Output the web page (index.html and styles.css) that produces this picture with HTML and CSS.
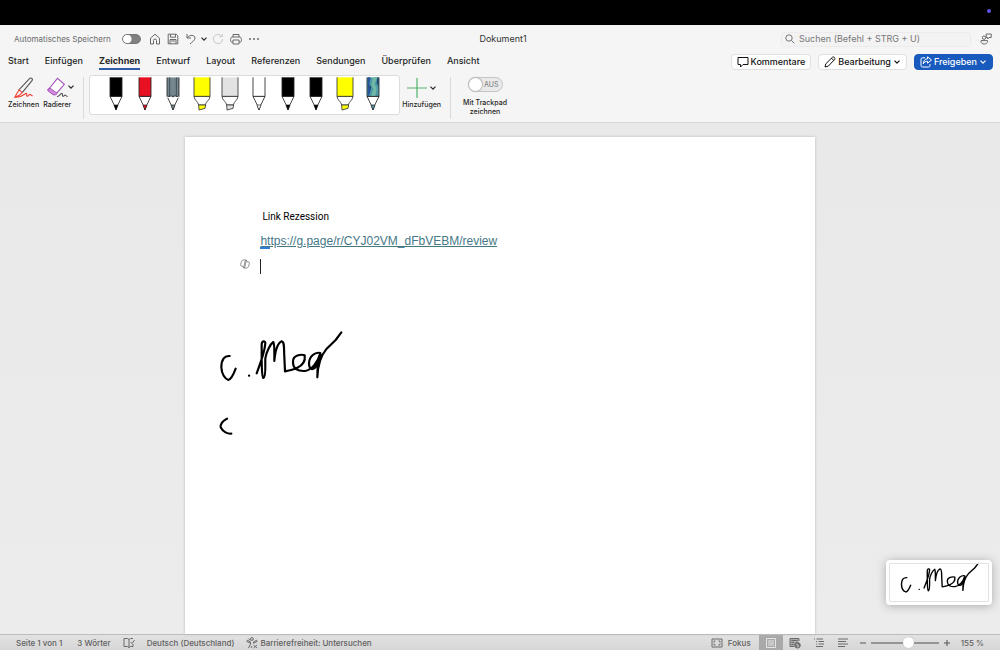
FILE: index.html
```html
<!DOCTYPE html>
<html lang="de">
<head>
<meta charset="utf-8">
<title>Dokument1</title>
<link rel="stylesheet" href="styles.css">
</head>
<body>
<svg class="defs" aria-hidden="true">
  <defs>
    <symbol id="chev" viewBox="0 0 8 8"><path d="M1.500 2.700 4 5.200l2.500-2.500" fill="none" stroke="currentColor" stroke-width="1.200"/></symbol>
    <symbol id="pen" viewBox="0 0 60 100">
      <path d="M12 57 25 84 30 98 35 84 48 57Z" fill="#fff" stroke="#222" stroke-width="2.500"/>
      <path d="M24 83h12l-6 15Z" fill="currentColor" stroke="#222" stroke-width="2"/>
      <path d="M12 0v57h36V0" fill="currentColor" stroke="#222" stroke-width="2.500"/>
    </symbol>
    <symbol id="marker" viewBox="0 0 60 100">
      <path d="M6 57c1 13 12 14 14 26h20c2-12 13-13 14-26Z" fill="#fff" stroke="#333" stroke-width="2.500"/>
      <path d="M20 83h21l-2 10-18 5Z" fill="currentColor" stroke="#333" stroke-width="2.500"/>
      <path d="M6 0v57h48V0" fill="currentColor" stroke="#333" stroke-width="2.500"/>
    </symbol>
    <g id="signature" fill="none" stroke="#000" stroke-width="6.500" stroke-linecap="round" stroke-linejoin="round">
      <path d="M74 108C58 107 49 119 49 142c1 20 11 35 21 38 8-2 16-18 22-34"/>
      <path d="M132 167h.5"/>
      <path d="M155 160c8-22 24-62 26-90 0-9-11-8-11 4v36c0 30 0 58 5 64 9-2 5-44 6-59 3-20 15-43 24-49 4 4 3 34 3 57 2-23 7-52 22-59 10 2 6 26 8 46l2 44c12-2 24-4 37-11 15-7 25-18 22-37-10-4-36-1-35 19 0 24 16 29 36 28 20-3 39-26 46-54-16-4-33 10-34 30 0 22 14 22 21 10 8-12 12-24 14-35-10 16-10 41-10 68 1-32 8-62 28-86l27-26 17-23"/>
    </g>
  </defs>
</svg>

<div class="menubar"><span class="mic-dot"></span></div>

<header class="header">
  <div class="titlebar">
    <div class="quick">
      <label class="autosave" for="autosave">Automatisches Speichern</label>
      <input class="switch" id="autosave" type="checkbox">
      <button class="icon-btn" aria-label="Start"><svg viewBox="0 0 12 12"><path d="M1.500 5.200 6 1.200l4.500 4V11H7.500V7.500a1.500 1.500 0 0 0-3 0V11h-3Z"/></svg></button>
      <button class="icon-btn" aria-label="Speichern"><svg viewBox="0 0 12 12"><path d="M1.200 1.200h8l1.600 1.600v8H1.200ZM3.500 1.200v3h5v-3M3 10.800V6.500h6v4.300M4 8h4"/></svg></button>
      <button class="icon-btn undo" aria-label="Rückgängig"><svg viewBox="0 0 12 12"><path d="M2 1v4h4M2 5c3-4 8-3 8 0 0 2.500-3 4-5 6"/></svg></button>
      <button class="chev-btn more" aria-label="Mehr"><svg><use href="#chev"/></svg></button>
      <button class="icon-btn pale" aria-label="Wiederholen"><svg viewBox="0 0 12 12"><path d="M9.500 3A4.600 4.600 0 1 0 10.600 6M10.300 1v2.700H7.500"/></svg></button>
      <button class="icon-btn" aria-label="Drucken"><svg viewBox="0 0 12 12"><path d="M3 4V1.500h6V4M3 9H1.500C0 9 .5 4 2 4h8c1.500 0 2 5 .5 5H9M3 7h6v4H3Z"/></svg></button>
      <button class="icon-btn" aria-label="Weitere"><svg viewBox="0 0 12 12"><path class="dots" d="M2 6h0M6 6h0M10 6h0"/></svg></button>
    </div>
    <h1 class="doc-title">Dokument1</h1>
    <div class="find">
      <div class="search">
        <svg viewBox="0 0 10 10"><circle cx="4" cy="4" r="3.200"/><path d="m6.300 6.300 3 3"/></svg>
        <input type="search" aria-label="Suchen" placeholder="Suchen (Befehl + STRG + U)">
      </div>
      <button class="icon-btn" aria-label="Personen"><svg viewBox="0 0 12 12"><path d="M6.200 1h5v3.500H9L7.700 6V4.500H6.200ZM1 7.600h6.500v1c0 3.200-6.500 3.200-6.500 0Z"/><circle cx="4" cy="4.700" r="1.700"/></svg></button>
    </div>
  </div>

  <div class="tabrow">
    <nav class="tabs">
      <a href="#start">Start</a><a href="#einfuegen">Einfügen</a><a class="active" href="#zeichnen">Zeichnen</a><a href="#entwurf">Entwurf</a><a href="#layout">Layout</a><a href="#referenzen">Referenzen</a><a href="#sendungen">Sendungen</a><a href="#ueberpruefen">Überprüfen</a><a href="#ansicht">Ansicht</a>
    </nav>
    <div class="actions">
      <button class="action"><svg viewBox="0 0 12 12"><path d="M1 1.500h10v7H6L3.500 11V8.500H1Z"/></svg>Kommentare</button>
      <button class="action"><svg viewBox="0 0 12 12"><path d="m1 11 .8-3.200L8.500 1.200c1.200-1 3.200.8 2.200 2.200L4.200 10.200ZM7.500 2.200l2.300 2.300"/></svg>Bearbeitung<svg class="chev"><use href="#chev"/></svg></button>
      <button class="action primary"><svg viewBox="0 0 12 12"><path d="M5 1.800H2.500Q1 1.800 1 3.300v6Q1 11 2.500 11h6Q10 11 10 9.500V8M7.500.8l4 3.200-4 3.200V5.300C5.500 5.300 4.300 6 3.300 7.800c0-3 1.700-5 4.200-5Z"/></svg>Freigeben<svg class="chev"><use href="#chev"/></svg></button>
    </div>
  </div>

  <div class="ribbon">
    <div class="group tools">
      <button class="tool"><svg class="art" viewBox="0 0 24 24"><path d="M6.500 14 18 1.700c2-1.500 4 .5 2.700 2.300L10 17" fill="none" stroke="#555" stroke-width="1.200"/><path d="M6.500 14 10 17 7 20 2 22Zm-4.500 8c6 1 9-2 12-4 2-1 0 3 1.500 3s2-2 3-2 1 1.500 3 1.500" fill="none" stroke="#ee4136" stroke-width="1.200"/></svg>Zeichnen</button>
      <button class="tool"><svg class="art" viewBox="0 0 24 24"><path d="m4 12 8.500-10.500L20 8l-9.500 11H8l-6-5Z" fill="#fff" stroke="#a452b8" stroke-width="1.200"/><path d="m4 12-2 3 6 4.500h2.500L12 17.500Z" fill="#d08bdd" stroke="#a452b8"/><path d="M12 21c2 1.500 4-4 5.500-3s-.5 3 1 3 1.500-2 3-1 1 1.500 2 1" fill="none" stroke="#555" stroke-width="1.200"/></svg>Radierer</button>
      <button class="chev-btn" aria-label="Radiereroptionen"><svg><use href="#chev"/></svg></button>
    </div>
    <div class="pens">
      <button class="pen black" aria-label="Stift schwarz"><svg><use href="#pen"/></svg></button>
      <button class="pen red" aria-label="Stift rot"><svg><use href="#pen"/></svg></button>
      <button class="pen slate" aria-label="Bleistift"><svg viewBox="0 0 60 100"><use href="#pen" width="60" height="100"/><path d="M12 55q6 7 12 0 6 8 12 0 6 7 12 0v6H12Z" fill="#fff"/><path d="M12 55q6 7 12 0 6 8 12 0 6 7 12 0M20 0v55M40 0v55" fill="none" stroke="#37434b" stroke-width="2.500"/></svg></button>
      <button class="pen yellow" aria-label="Textmarker gelb"><svg><use href="#marker"/></svg></button>
      <button class="pen gray" aria-label="Textmarker grau"><svg><use href="#marker"/></svg></button>
      <button class="pen white" aria-label="Stift weiß"><svg><use href="#pen"/></svg></button>
      <button class="pen black" aria-label="Stift schwarz 2"><svg><use href="#pen"/></svg></button>
      <button class="pen black" aria-label="Stift schwarz 3"><svg><use href="#pen"/></svg></button>
      <button class="pen yellow" aria-label="Textmarker gelb 2"><svg><use href="#marker"/></svg></button>
      <button class="pen galaxy" aria-label="Stift Galaxie"><svg viewBox="0 0 60 100"><use href="#pen" width="60" height="100"/><path d="M14 0h9l-4 18 5 16-6 21h-4Z" fill="#28549b"/><path d="m30 0-5 22 6 14-6 19h12l4-22-6-12 7-21Z" fill="#70b8a3"/><path d="M43 0h4v28l-6-10ZM20 24l5 5-4 9Z" fill="#21446f"/></svg></button>
    </div>
    <div class="group add">
      <button class="tool"><span class="add-line"><svg class="plus" viewBox="0 0 20 20"><path d="M10 0v20M0 10h20" stroke="#4fb36a" stroke-width="1.200"/></svg><svg class="chev"><use href="#chev"/></svg></span>Hinzufügen</button>
    </div>
    <div class="group track">
      <label class="trackpad"><span class="off-wrap"><input class="off" type="checkbox"><span class="off-text">AUS</span></span><span>Mit Trackpad<br>zeichnen</span></label>
    </div>
  </div>
</header>

<main class="workspace">
  <article class="page">
    <p class="note">Link Rezession</p>
    <p class="link-line"><a href="https://g.page/r/CYJ02VM_dFbVEBM/review">https://g.page/r/CYJ02VM_dFbVEBM/review</a></p>
    <div class="caret-line">
      <svg class="copilot" viewBox="0 0 10 10"><path d="M3.400 1h3L4.800 8.200Q4.500 9 3.700 8.800L3 7.200H2Q.3 7.200.7 5.300L1.400 2.700Q1.800 1 3.400 1ZM6.600 9h-3L5.200 1.800Q5.500 1 6.300 1.200L7 2.800h1Q9.700 2.800 9.300 4.700L8.600 7.300Q8.200 9 6.600 9Z"/></svg>
      <span class="caret"></span>
    </div>
    <svg class="ink" viewBox="0 0 450 390"><use href="#signature"/><path d="M66 296c-14 6-21 19-19 26 7 14 21 20 32 19" fill="none" stroke="#000" stroke-width="6.500" stroke-linecap="round"/></svg>
  </article>
  <aside class="preview"><svg viewBox="0 0 450 190" preserveAspectRatio="none"><use href="#signature"/></svg></aside>
</main>

<footer class="status">
  <span class="pages">Seite 1 von 1</span>
  <span class="words">3 Wörter</span>
  <button class="stat-btn proof" aria-label="Rechtschreibung"><svg viewBox="0 0 12 12"><path d="M6 10.500V2.500L4.500 1.500H1v8h3.500L6 10.500l1.500-1H10V7M6 2.500l1.500-1H10M7.500 5 9 6.500 11.500 3"/></svg></button>
  <button class="stat-btn">Deutsch (Deutschland)</button>
  <button class="stat-btn access"><svg viewBox="0 0 12 12"><circle cx="6" cy="2" r="1.400"/><path d="M1.500 3.200 4.500 5v2l-2 4M10.500 3.200 7.500 5v1.500M1.500 3.200.8 4.500 4.500 6M10.500 3.200l.7 1.300-3.500 1.500M5 11l1-2M7.500 8l3.500 3M11 8l-3.500 3M2.500 1.500l2 2"/></svg>Barrierefreiheit: Untersuchen</button>
  <div class="views">
    <button class="stat-btn focus"><svg viewBox="0 0 12 12"><path d="M1 2h10v8H1Z"/><path d="M3 5.500V4h1.500M7.500 4H9v1.500M9 6.500V8H7.500M4.500 8H3V6.500"/></svg>Fokus</button>
    <button class="view on" aria-label="Drucklayout"><svg viewBox="0 0 12 12"><path d="M1.500 1.500h9v9h-9ZM3 4h6M3 6h6M3 8h6"/></svg></button>
    <button class="view" aria-label="Weblayout"><svg viewBox="0 0 12 12"><path d="M5 9.500H1v-8h9V4" fill="#aaa"/><path d="M2.500 3.500h6M2.500 5.500H5M2.500 7.500h2"/><circle cx="8.500" cy="8.300" r="2.800" fill="#777"/><path class="cut" d="M7.500 7l1.500 1.500v2"/></svg></button>
    <button class="view" aria-label="Gliederung"><svg viewBox="0 0 12 12"><path d="M1 2h1M3.500 2H10M3 4.500h1M5.500 4.500H11M3 7h1M5.500 7H11M3 9.500h7"/></svg></button>
    <button class="view" aria-label="Entwurf"><svg viewBox="0 0 12 12"><path d="M1 2h10M1 4.500h8M1 7h10M1 9.500h7"/></svg></button>
    <button class="zoom-btn" aria-label="Verkleinern"><svg viewBox="0 0 6 6"><path d="M0 3h6"/></svg></button>
    <input class="zoom" type="range" min="0" max="100" value="56" aria-label="Zoom">
    <button class="zoom-btn" aria-label="Vergrößern"><svg viewBox="0 0 6 6"><path d="M0 3h6M3 0v6"/></svg></button>
    <output class="percent">155 %</output>
  </div>
</footer>
</body>
</html>
```
FILE: styles.css
```css
* { box-sizing: border-box; }
body {
  margin: 0;
  height: 100vh;
  display: flex;
  flex-direction: column;
  overflow: hidden;
  font-family: Inter, "Liberation Sans", sans-serif;
  font-size: 9px;
  line-height: 12px;
  color: #262626;
  background: #ebebeb;
}
button, input { font: inherit; color: inherit; }
button { border: 0; padding: 0; background: none; display: flex; align-items: center; }
svg { display: block; flex: none; }
.defs { width: 0; height: 0; position: absolute; }

.menubar { height: 25px; flex: none; background: #000; display: flex; justify-content: flex-end; padding: 9px 9px 0; }
.mic-dot { width: 4px; height: 4px; border-radius: 50%; background: #5e57ef; }

.header { flex: none; background: #f5f5f5; border-bottom: 1px solid #d6d6d6; }
.titlebar { display: grid; grid-template-columns: 1fr auto 1fr; align-items: center; height: 28px; padding: 0 8px 0 14px; }
.quick { display: flex; align-items: center; gap: 6px; }
.autosave { color: #6b6b6b; font-size: 8px; margin-right: 5px; }
.switch { appearance: none; width: 19px; height: 10px; margin: 0 2px 0 0; border: 1px solid #777; border-radius: 5px; background: radial-gradient(circle at 4px 4px, #fff 4px, #808080 5px); }
.icon-btn svg { width: 12px; height: 12px; fill: none; stroke: #686868; stroke-width: 1; stroke-linejoin: round; }
.undo { margin-right: -3px; }
.more { margin-right: -2px; }
.pale svg { stroke: #c6c6c6; }
.icon-btn .dots { stroke-width: 2; stroke-linecap: round; }
.chev-btn svg, .chev { width: 8px; height: 8px; }
.doc-title { margin: 0; font-size: 9px; font-weight: 400; color: #333; }
.find { display: flex; justify-content: flex-end; align-items: center; gap: 9px; }
.search { display: flex; align-items: center; gap: 4px; width: 190px; height: 15px; padding: 0 3px; border: 1px solid #ececec; border-radius: 4px; background: #f3f3f3; }
.search svg { width: 10px; height: 10px; fill: none; stroke: #777; }
.search input { flex: 1; min-width: 0; border: 0; padding: 0; background: none; outline: 0; }
.search input::placeholder { color: #777; opacity: 1; }

.tabrow { display: flex; justify-content: space-between; align-items: flex-start; height: 18px; padding: 0 7px 0 8px; }
.tabs { display: flex; gap: 16px; }
.tabs a { color: #262626; text-decoration: none; font-weight: 500; padding-top: 2px; height: 17px; border-bottom: 2px solid transparent; }
.tabs .active { font-weight: 700; border-color: #2f5ba8; }
.actions { display: flex; gap: 7px; padding-top: 1px; }
.action { height: 16px; padding: 0 5px; gap: 2px; border: 1px solid #e0e0e0; border-radius: 4px; background: #fff; font-weight: 500; color: #111; }
.action svg { width: 12px; height: 12px; fill: none; stroke: currentColor; stroke-linejoin: round; }
.action .chev { width: 8px; height: 8px; }
.action.primary { background: #185abd; border-color: #185abd; color: #fff; }

.ribbon { display: flex; align-items: flex-start; height: 51px; padding: 4px 8px 2px; }
.tool { flex-direction: column; gap: 1px; font-size: 7px; font-weight: 500; line-height: 10px; }
.art { width: 22px; height: 22px; }
.tools { display: flex; align-items: flex-start; gap: 4px; height: 42px; margin-top: 2px; padding-right: 8px; border-right: 1px solid #dadada; }
.tools .chev-btn { margin: 6px 0 0 -8px; }
.pens { display: flex; justify-content: space-between; width: 311px; height: 40px; margin-left: 5px; padding: 1px 16px; border: 1px solid #dcdcdc; border-radius: 3px; background: #fff; }
.pen svg { width: 20px; height: 34px; }
.pen { height: 34px; }
.black { color: #000; }
.red { color: #e81123; }
.slate { color: #75868f; }
.yellow { color: #ffff00; }
.gray { color: #e2e2e2; }
.white { color: #fff; }
.galaxy { color: #4c9aa5; }
.add { height: 42px; margin-top: 2px; padding: 0 9px 0 2px; border-right: 1px solid #dadada; }
.add-line { display: flex; align-items: center; gap: 2px; height: 22px; }
.plus { width: 20px; height: 20px; }
.track { padding: 2px 0 0 12px; }
.trackpad { display: flex; flex-direction: column; align-items: center; gap: 6px; font-size: 7px; line-height: 9px; font-weight: 500; text-align: center; }
.off-wrap { position: relative; display: flex; }
.off { appearance: none; width: 35px; height: 15px; margin: 0; border: 1px solid #c4c4c4; border-radius: 8px; background: #e9e9e9; }
.off::before { content: ""; display: block; width: 13px; height: 13px; border-radius: 50%; background: #fff; box-shadow: 0 0 1px 1px #bbb; }
.off-text { position: absolute; right: 4px; top: 3px; color: #8b8b8b; }

.workspace { position: relative; flex: 1; min-height: 0; display: flex; justify-content: center; padding: 14px 16px 0; background: linear-gradient(#e9e9e9, #ececec); }
.page { position: relative; width: 65%; padding: 74px 75px 0; background: #fff; box-shadow: 0 0 3px #bbb; }
.note { margin: 0; padding: 0 2px; font: 10px/12px Roboto, "Liberation Sans", sans-serif; color: #000; }
.link-line { margin: 10px 0 0; font: 12px/16px "Liberation Sans", Arial, sans-serif; }
.link-line a { color: #467886; text-underline-offset: 1px; }
.link-line::after { content: ""; display: block; width: 10px; height: 2px; margin-top: -2px; background: #2f7ed8; }
.caret-line { display: flex; align-items: flex-start; gap: 10px; margin: 10px 0 0 -20px; }
.copilot { width: 10px; height: 10px; fill: none; stroke: #777; stroke-width: .8; }
.caret { width: 1px; height: 15px; background: #222; }
.ink { position: absolute; left: 20px; top: 183px; width: 150px; height: 130px; }
.preview { position: absolute; right: 8px; bottom: 29px; width: 106px; height: 45px; padding: 2px; border: 3px solid #fff; border-radius: 4px; background: #fff; outline: 1px solid #e2e2e2; outline-offset: -4px; box-shadow: 0 1px 10px #aaa; }
.preview svg { width: 96px; height: 38px; margin-top: -9px; overflow: visible; }

.status { flex: none; height: 16px; display: flex; align-items: center; padding: 0 16px; border-top: 1px solid #bcbcbc; background: linear-gradient(#e2e2e2, #d6d6d6); font-size: 8px; font-weight: 500; color: #606060; }
.words { margin: 0 12px 0 15px; }
.status svg { fill: none; stroke: #6b6b6b; }
.stat-btn svg, .view svg { width: 12px; height: 12px; }
.proof { margin-right: 12px; }
.access { gap: 2px; margin-left: 12px; }
.views { display: flex; align-items: center; margin-left: auto; height: 15px; }
.focus { gap: 5px; margin-right: 8px; }
.view { justify-content: center; width: 24px; height: 15px; }
.view.on { background: #a9a9a9; }
.status .on svg { stroke: #e5e5e5; }
.status .cut { stroke: #ddd; }
.zoom-btn { margin: 0 5px; }
.zoom-btn svg { width: 6px; height: 6px; stroke: #555; }
.zoom { appearance: none; width: 68px; height: 12px; margin: 0; background: linear-gradient(#959595, #959595) center / 100% 2px no-repeat; }
.zoom::-webkit-slider-thumb { appearance: none; width: 11px; height: 11px; border-radius: 50%; background: #fff; box-shadow: 0 0 1px #999; }
.percent { margin-left: 6px; }
```
